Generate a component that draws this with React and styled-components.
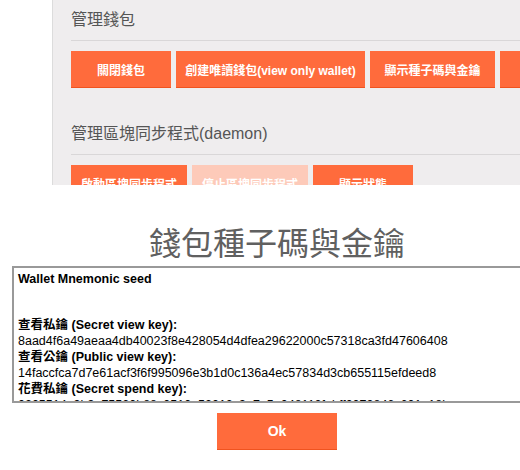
import React from 'react';
import styled, { createGlobalStyle } from 'styled-components';

const GlobalStyle = createGlobalStyle`
	html, body {
		margin: 0;
		padding: 0;
		background: #ffffff;
		overflow: hidden;
		width: 520px;
		height: 470px;
	}
	body {
		font-family: 'Liberation Sans', 'Noto Sans CJK TC', sans-serif;
	}
`;

const walletButtons = [
	{ label: '關閉錢包', width: 100 },
	{ label: '創建唯讀錢包(view only wallet)', width: 189 },
	{ label: '顯示種子碼與金鑰', width: 125 },
	{ label: '匯出錢包', width: 100 },
];

const daemonButtons = [
	{ label: '啟動區塊同步程式', width: 116 },
	{ label: '停止區塊同步程式', width: 116, disabled: true },
	{ label: '顯示狀態', width: 100 },
];

const keys = [
	{
		label: '查看私鑰 (Secret view key):',
		value: '8aad4f6a49aeaa4db40023f8e428054d4dfea29622000c57318ca3fd47606408',
	},
	{
		label: '查看公鑰 (Public view key):',
		value: '14faccfca7d7e61acf3f6f995096e3b1d0c136a4ec57834d3cb655115efdeed8',
	},
	{
		label: '花費私鑰 (Secret spend key):',
		value: '0205514a9b3e75520b88c0510e52012c3e7a5e048112fabff0079846c601a18b',
	},
];

const App = () => {
	return (
		<>
			<GlobalStyle />
			<StylePage>
				<StyleSidebar />
				<StyleMain>
					<StyleSection>
						<StyleHeading>管理錢包</StyleHeading>
						<StyleRow>
							{walletButtons.map((b) => (
								<StyleButton key={b.label} $width={b.width}>
									{b.label}
								</StyleButton>
							))}
						</StyleRow>
					</StyleSection>
					<StyleSection>
						<StyleHeading>管理區塊同步程式(daemon)</StyleHeading>
						<StyleRow>
							{daemonButtons.map((b) => (
								<StyleButton
									key={b.label}
									$width={b.width}
									$disabled={b.disabled}
								>
									{b.label}
								</StyleButton>
							))}
						</StyleRow>
					</StyleSection>
				</StyleMain>
			</StylePage>
			<StyleDialog>
				<StyleTitle>錢包種子碼與金鑰</StyleTitle>
				<StyleKeyBox>
					<StyleLabel>Wallet Mnemonic seed</StyleLabel>
					<StyleSeed />
					{keys.map((k) => (
						<div key={k.label}>
							<StyleLabel>{k.label}</StyleLabel>
							<StyleValue>{k.value}</StyleValue>
						</div>
					))}
				</StyleKeyBox>
				<StyleOk>Ok</StyleOk>
			</StyleDialog>
		</>
	);
};

const StylePage = styled.div`
	display: flex;
	height: 185px;
	overflow: hidden;
`;

const StyleSidebar = styled.div`
	width: 52px;
	flex-shrink: 0;
	background: #ffffff;
	border-right: 1px solid #dcdcdc;
`;

const StyleMain = styled.div`
	flex: 1;
	min-width: 0;
	background: #efedee;
	padding: 8px 0 0 18px;
`;

const StyleSection = styled.div`
	margin-bottom: 34px;
`;

const StyleHeading = styled.h2`
	margin: 0;
	font-size: 16px;
	font-weight: normal;
	line-height: 24px;
	color: #555555;
	padding-bottom: 8px;
	border-bottom: 1px solid #d9d7d8;
	white-space: nowrap;
`;

const StyleRow = styled.div`
	display: flex;
	gap: 5px;
	margin-top: 10px;
`;

const StyleButton = styled.div`
	flex-shrink: 0;
	width: ${(p) => p.$width}px;
	height: 36px;
	display: flex;
	align-items: center;
	justify-content: center;
	background: ${(p) => (p.$disabled ? '#fdcab9' : '#ff6b3c')};
	border-bottom: 1px solid ${(p) => (p.$disabled ? '#fdcab9' : '#f0531f')};
	color: #ffffff;
	font-size: 12px;
	font-weight: bold;
	white-space: nowrap;
`;

const StyleDialog = styled.div`
	width: 554px;
	background: #ffffff;
	display: flex;
	flex-direction: column;
	align-items: center;
	padding-top: 32px;
`;

const StyleTitle = styled.h1`
	margin: 0;
	font-family: 'Noto Sans CJK TC', serif;
	font-size: 32px;
	font-weight: normal;
	line-height: 48px;
	color: #606060;
`;

const StyleKeyBox = styled.div`
	align-self: stretch;
	margin: 1px 12px 0;
	height: 127px;
	overflow: hidden;
	border: 2px solid #999999;
	padding: 3px 4px;
	font-size: 12.5px;
	line-height: 16px;
	color: #000000;
	text-align: left;
`;

const StyleLabel = styled.div`
	font-weight: bold;
`;

const StyleSeed = styled.div`
	height: 30px;
`;

const StyleValue = styled.div`
	white-space: nowrap;
`;

const StyleOk = styled.div`
	margin-top: 10px;
	width: 120px;
	height: 36px;
	display: flex;
	align-items: center;
	justify-content: center;
	background: #ff6b3c;
	border-bottom: 1px solid #f0531f;
	color: #ffffff;
	font-size: 14px;
	font-weight: bold;
`;

export default App;
